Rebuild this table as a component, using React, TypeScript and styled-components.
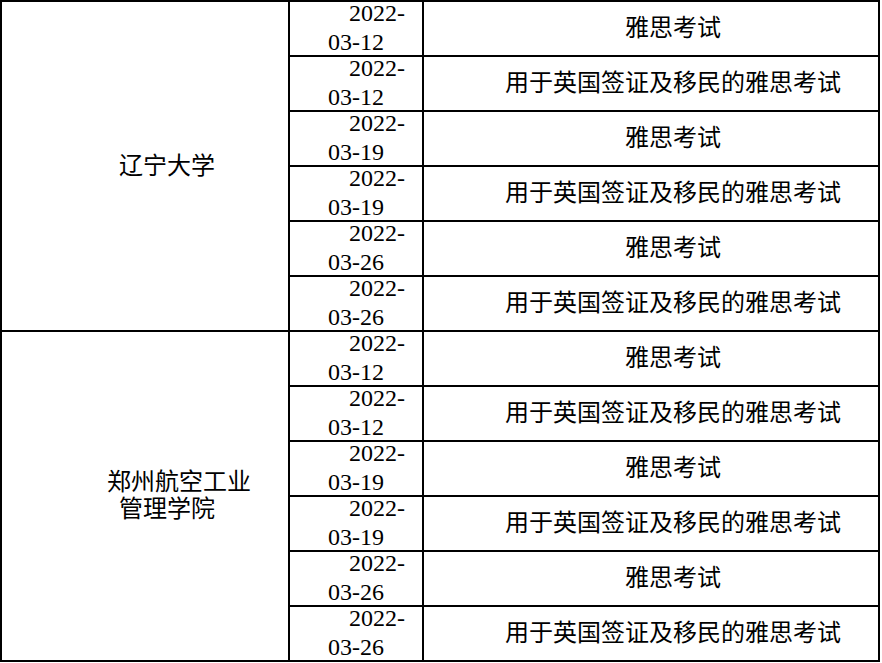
import React from 'react';
import styled, { createGlobalStyle } from 'styled-components';

const EXAM = '雅思考试';
const UKVI_EXAM = '用于英国签证及移民的雅思考试';
const DATES = ['03-12', '03-12', '03-19', '03-19', '03-26', '03-26'];

const SCHOOLS = [
  { lines: ['辽宁大学'], indent: 0 },
  { lines: ['郑州航空工业', '管理学院'], indent: 24 },
];

const GlobalStyle = createGlobalStyle`
  html, body {
    margin: 0;
    padding: 0;
    background: #ffffff;
  }
  body {
    font-family: "Liberation Serif", "Noto Sans CJK SC", serif;
    color: #000000;
  }
`;

const App = (): JSX.Element => {
  return (
    <>
      <GlobalStyle />
      <Table>
        <colgroup>
          <Col width={288} />
          <Col width={134} />
          <Col width={456} />
        </colgroup>
        <tbody>
          {SCHOOLS.map((school) =>
            DATES.map((date, i) => (
              <Row key={school.lines[0] + i}>
                {i === 0 && (
                  <NameCell rowSpan={DATES.length} indent={school.indent}>
                    {school.lines.map((line, j) => (
                      <React.Fragment key={line}>
                        {j > 0 && <br />}
                        {line}
                      </React.Fragment>
                    ))}
                  </NameCell>
                )}
                <DateCell>
                  <DateStack>
                    2022-
                    <br />
                    {date}
                  </DateStack>
                </DateCell>
                <ExamCell>{i % 2 === 0 ? EXAM : UKVI_EXAM}</ExamCell>
              </Row>
            ))
          )}
        </tbody>
      </Table>
    </>
  );
};

const Table = styled.table`
  border-collapse: collapse;
  table-layout: fixed;
  width: 880px;
  font-size: 24px;
  line-height: 27px;
`;

const Col = styled.col<{ width: number }>`
  width: ${({ width }) => `${width}px`};
`;

const Row = styled.tr`
  height: 55px;
`;

const BaseCell = styled.td`
  border: 2px solid #000000;
  padding: 0;
  text-align: center;
  vertical-align: middle;
  white-space: nowrap;
`;

const NameCell = styled(BaseCell)<{ indent: number }>`
  padding-left: 44px;
  text-indent: ${({ indent }) => `${indent}px`};
`;

const DateCell = styled(BaseCell)`
  overflow: visible;
`;

const DateStack = styled.div`
  line-height: 29px;
  height: 58px;
  margin: -3px 0 -2px;
  text-indent: 42px;
`;

const ExamCell = styled(BaseCell)`
  text-indent: 44px;
`;

export default App;
